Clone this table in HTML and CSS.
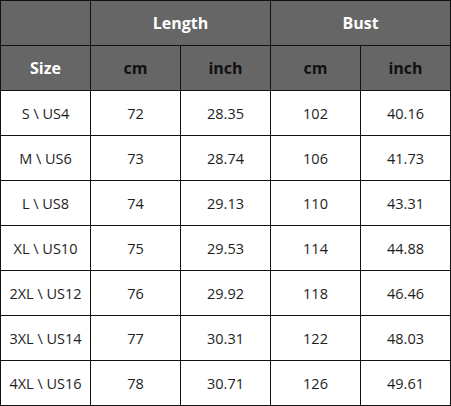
FILE: index.html
```html
<!DOCTYPE html>
<html>
<head>
<meta charset="utf-8">
<link rel="stylesheet" href="styles.css">
</head>
<body>
<div class="chart">
  <div class="cell head"></div>
  <div class="cell head span2 light">Length</div>
  <div class="cell head span2 light">Bust</div>

  <div class="cell head light">Size</div>
  <div class="cell head">cm</div>
  <div class="cell head">inch</div>
  <div class="cell head">cm</div>
  <div class="cell head">inch</div>

  <div class="cell">S \ US4</div><div class="cell">72</div><div class="cell">28.35</div><div class="cell">102</div><div class="cell">40.16</div>
  <div class="cell">M \ US6</div><div class="cell">73</div><div class="cell">28.74</div><div class="cell">106</div><div class="cell">41.73</div>
  <div class="cell">L \ US8</div><div class="cell">74</div><div class="cell">29.13</div><div class="cell">110</div><div class="cell">43.31</div>
  <div class="cell">XL \ US10</div><div class="cell">75</div><div class="cell">29.53</div><div class="cell">114</div><div class="cell">44.88</div>
  <div class="cell">2XL \ US12</div><div class="cell">76</div><div class="cell">29.92</div><div class="cell">118</div><div class="cell">46.46</div>
  <div class="cell">3XL \ US14</div><div class="cell">77</div><div class="cell">30.31</div><div class="cell">122</div><div class="cell">48.03</div>
  <div class="cell">4XL \ US16</div><div class="cell">78</div><div class="cell">30.71</div><div class="cell">126</div><div class="cell">49.61</div>
</div>
</body>
</html>
```
FILE: styles.css
```css
html, body {
  margin: 0;
  padding: 0;
  background: #ffffff;
}
.chart {
  display: grid;
  grid-template-columns: repeat(5, 89px);
  grid-auto-rows: 44px;
  gap: 1px;
  padding: 1px;
  width: 451px;
  box-sizing: border-box;
  background: #111111;
  font-family: "Open Sans", "Liberation Sans", sans-serif;
}
.cell {
  background: #ffffff;
  display: flex;
  align-items: center;
  justify-content: center;
  font-size: 14.5px;
  color: #1e1e1e;
}
.head {
  background: #666666;
  font-weight: 700;
  font-size: 16px;
  color: #111111;
}
.head.light {
  color: #ffffff;
}
.span2 {
  grid-column: span 2;
}
```
